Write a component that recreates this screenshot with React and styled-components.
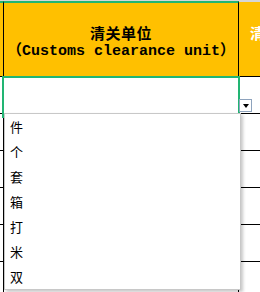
import styled, { createGlobalStyle } from 'styled-components'

const GlobalStyle = createGlobalStyle`
  html, body {
    margin: 0;
    padding: 0;
    background: #fff;
  }
  body {
    width: 260px;
    height: 292px;
    overflow: hidden;
  }
`

const Sheet = styled.div`
  position: relative;
  width: 260px;
  height: 292px;
  overflow: hidden;
  background: #fff;
  border-top: 1px solid #d6d6d6;
  box-sizing: border-box;
`

const Row = styled.div`
  display: grid;
  grid-template-columns: 3px 236px 1fr;
  height: ${p => p.$h}px;
`

const Cell = styled.div`
  box-sizing: border-box;
  min-width: 0;
  overflow: hidden;
  background: ${p => (p.$head ? '#ffc000' : '#fff')};
  border-bottom: 1px solid #000;
  ${p => p.$main && 'border-left: 1px solid #000; border-right: 1px solid #000;'}
  ${p => p.$head && p.$sel && 'border-top: 2px solid #22b573;'}
  ${p => p.$head && !p.$sel && 'border-top: 1px solid #d6d6d6;'}
`

const HeadText = styled.div`
  height: 100%;
  display: flex;
  flex-direction: column;
  align-items: center;
  justify-content: center;
  padding-top: 4px;
  box-sizing: border-box;
  color: #000;
  font-weight: bold;
  white-space: nowrap;
`

const TitleCn = styled.div`
  font-family: "Noto Sans CJK SC", sans-serif;
  font-size: 15px;
  letter-spacing: 0.5px;
  line-height: 19px;
`

const TitleEn = styled.div`
  font-family: "Liberation Mono", "Noto Sans CJK SC", monospace;
  font-size: 15px;
  line-height: 19px;
`

const NextHead = styled.div`
  padding: 21px 0 0 11px;
  color: #fff;
  font-weight: bold;
  font-family: "Noto Sans CJK SC", sans-serif;
  font-size: 15px;
  line-height: 19px;
  white-space: nowrap;
`

const Selection = styled.div`
  position: absolute;
  left: 2px;
  top: 75px;
  width: 238px;
  height: 42px;
  border: 2px solid #22b573;
  box-sizing: border-box;
`

const DropButton = styled.div`
  position: absolute;
  left: 239px;
  top: 98px;
  width: 13px;
  height: 13px;
  box-sizing: border-box;
  border: 1px solid #8ea3bd;
  background: #fff;
  display: flex;
  align-items: center;
  justify-content: center;

  &::after {
    content: "";
    width: 0;
    height: 0;
    border-left: 3.5px solid transparent;
    border-right: 3.5px solid transparent;
    border-top: 4px solid #000;
  }
`

const List = styled.ul`
  position: absolute;
  left: 4px;
  top: 112px;
  width: 237px;
  margin: 0;
  padding: 0;
  list-style: none;
  background: #fff;
  border: 1px solid #c8c8c8;
  box-sizing: border-box;
  box-shadow: 2px 2px 3px rgba(0, 0, 0, 0.22);
  z-index: 2;
`

const Item = styled.li`
  height: 25px;
  padding-left: 5px;
  display: flex;
  align-items: center;
  font-family: "Noto Sans CJK SC", sans-serif;
  font-size: 13px;
  color: #000;
`

const units = ['件', '个', '套', '箱', '打', '米', '双']

export default function App() {
  return (
    <>
      <GlobalStyle />
      <Sheet>
        <Row $h={76}>
          <Cell $head $sel />
          <Cell $head $sel $main>
            <HeadText>
              <TitleCn>清关单位</TitleCn>
              <TitleEn>（Customs clearance unit）</TitleEn>
            </HeadText>
          </Cell>
          <Cell $head>
            <NextHead>清关单位</NextHead>
          </Cell>
        </Row>
        {[0, 1, 2, 3, 4, 5].map(i => (
          <Row key={i} $h={37}>
            <Cell />
            <Cell $main />
            <Cell />
          </Row>
        ))}
        <Selection />
        <DropButton />
        <List>
          {units.map(u => (
            <Item key={u}>{u}</Item>
          ))}
        </List>
      </Sheet>
    </>
  )
}
